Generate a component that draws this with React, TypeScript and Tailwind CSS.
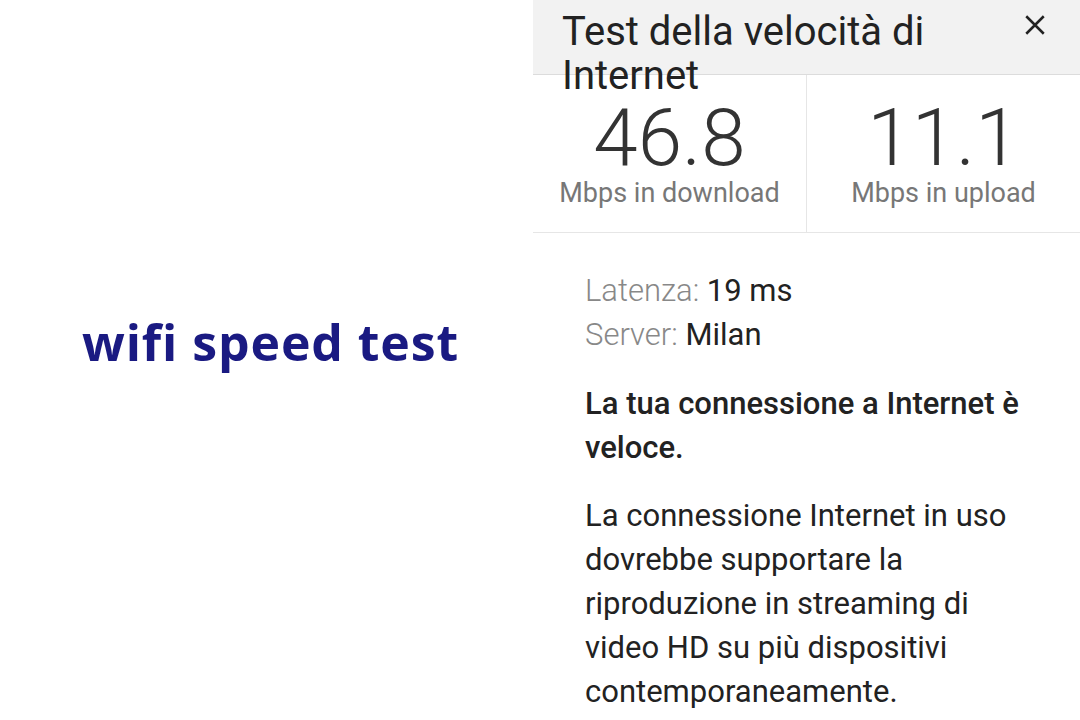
import React from "react";

const Stat = ({ value, label }: { value: string; label: string }) => (
  <div className="flex flex-1 flex-col items-center pt-[31px]">
    <div className="text-[80px] font-light leading-[64px] text-[#333]">{value}</div>
    <div className="mt-[7px] text-[27px] leading-[32px] text-[#777]">{label}</div>
  </div>
);

export default function App() {
  return (
    <div className="flex h-[720px] w-[1080px] overflow-hidden bg-white" style={{ fontFamily: "Roboto, 'Noto Sans', sans-serif" }}>
      {/* left brand */}
      <div className="flex w-[533px] shrink-0 items-center pl-[82px] pb-[36px]">
        <h1
          className="text-[50px] font-bold tracking-[0.9px] text-[#1a1a82]"
          style={{ fontFamily: "'Open Sans', 'Noto Sans', sans-serif" }}
        >
          wifi speed test
        </h1>
      </div>

      {/* result card */}
      <div className="flex flex-1 flex-col">
        <div className="relative h-[75px] shrink-0 border-b border-[#dcdcdc] bg-[#f2f2f2]">
          <div className="w-[420px] pl-[29px] pt-[10px] text-[40px] leading-[44px] text-[#222]">
            Test della velocità di Internet
          </div>
          <button className="absolute right-[30px] top-[10px] text-[#222]">
            <svg width="30" height="30" viewBox="0 0 24 24" fill="none" stroke="currentColor" strokeWidth="2">
              <path d="M5 5l14 14M19 5L5 19" />
            </svg>
          </button>
        </div>

        <div className="flex h-[158px] shrink-0 border-b border-[#e6e6e6]">
          <Stat value="46.8" label="Mbps in download" />
          <div className="w-px bg-[#e6e6e6]" />
          <Stat value="11.1" label="Mbps in upload" />
        </div>

        <div className="w-[500px] pl-[52px] pt-[36px] text-[31px] leading-[44px] text-[#222]">
          <div>
            <span className="font-light text-[#888]">Latenza: </span>19 ms
          </div>
          <div>
            <span className="font-light text-[#888]">Server: </span>Milan
          </div>
          <p className="mt-[25px] font-medium">La tua connessione a Internet è veloce.</p>
          <p className="mt-[24px]">
            La connessione Internet in uso dovrebbe supportare la riproduzione in streaming di video HD su più dispositivi
            contemporaneamente.
          </p>
        </div>
      </div>
    </div>
  );
}
